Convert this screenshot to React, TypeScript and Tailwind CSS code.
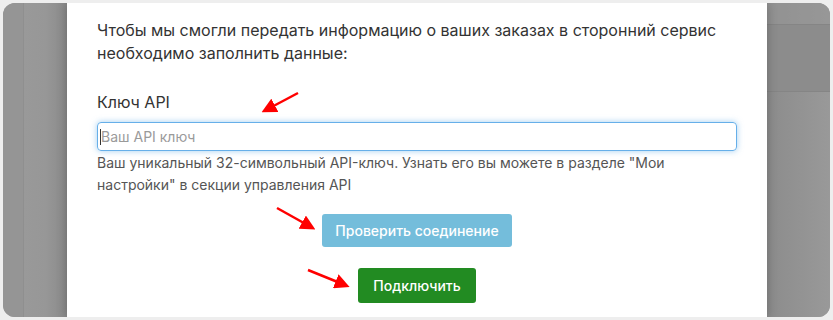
export default function App() {
  return (
    <div className="relative h-[320px] w-[833px] bg-[#eeeeee] p-[3px] [font-family:Inter,sans-serif]">
      <div className="flex h-full overflow-hidden rounded-[12px] bg-[#999999]">
        {/* фон слева */}
        <div className="flex w-[64px] shrink-0">
          <div className="w-[21px] border-r border-[#8f8f8f] bg-[#959595]" />
          <div className="flex-1 bg-gradient-to-r from-[#999999] via-[#979797] to-[#8a8a8a]" />
        </div>

        {/* модальное окно */}
        <div className="relative z-10 w-[700px] shrink-0 bg-white px-[30px] pt-[16px] shadow-[0_0_10px_rgba(0,0,0,0.25)]">
          <p className="text-[16px] leading-[23px] text-[#333333]">
            Чтобы мы смогли передать информацию о ваших заказах в сторонний сервис необходимо заполнить данные:
          </p>

          <div className="mt-[26px] text-[16px] leading-[22px] text-[#333333]">Ключ API</div>

          <div className="mt-[9px] flex h-[29px] items-center rounded-[4px] border border-[#66afe9] px-[2px] shadow-[0_0_6px_rgba(102,175,233,0.6)]">
            <span className="h-[16px] w-px bg-[#333333]" />
            <span className="text-[14px] text-[#9a9a9a]">Ваш API ключ</span>
          </div>

          <p className="mt-[1px] text-[14px] leading-[22px] text-[#555555]">
            Ваш уникальный 32-символьный API-ключ. Узнать его вы можете в разделе "Мои настройки" в секции управления API
          </p>

          <div className="mt-[18px] flex flex-col items-center gap-[21px]">
            <div className="flex h-[33px] w-[190px] items-center justify-center rounded-[3px] bg-[#74bddb] text-[14px] font-medium text-white">
              Проверить соединение
            </div>
            <div className="flex h-[35px] w-[118px] items-center justify-center rounded-[3px] bg-[#228b22] text-[14px] font-medium text-white">
              Подключить
            </div>
          </div>
        </div>

        {/* фон справа */}
        <div className="flex flex-1 flex-col bg-gradient-to-r from-[#8c8c8c] to-[#999999]">
          <div className="h-[21px] bg-[#969696]/60" />
          <div className="h-[68px] border-y border-[#858585] bg-[#8c8c8c]" />
          <div className="flex-1" />
        </div>
      </div>

      {/* стрелки */}
      <svg className="pointer-events-none absolute inset-0 z-20" width="833" height="320">
        <defs>
          <marker id="head" markerWidth="6" markerHeight="6" refX="4" refY="3" orient="auto" markerUnits="strokeWidth">
            <path d="M0,0 L6,3 L0,6 z" fill="#ff0000" />
          </marker>
        </defs>
        <line x1="298" y1="93" x2="266" y2="110" stroke="#ff0000" strokeWidth="2.5" markerEnd="url(#head)" />
        <line x1="277" y1="208" x2="311" y2="227" stroke="#ff0000" strokeWidth="2.5" markerEnd="url(#head)" />
        <line x1="308" y1="270" x2="345" y2="285" stroke="#ff0000" strokeWidth="2.5" markerEnd="url(#head)" />
      </svg>
    </div>
  );
}
